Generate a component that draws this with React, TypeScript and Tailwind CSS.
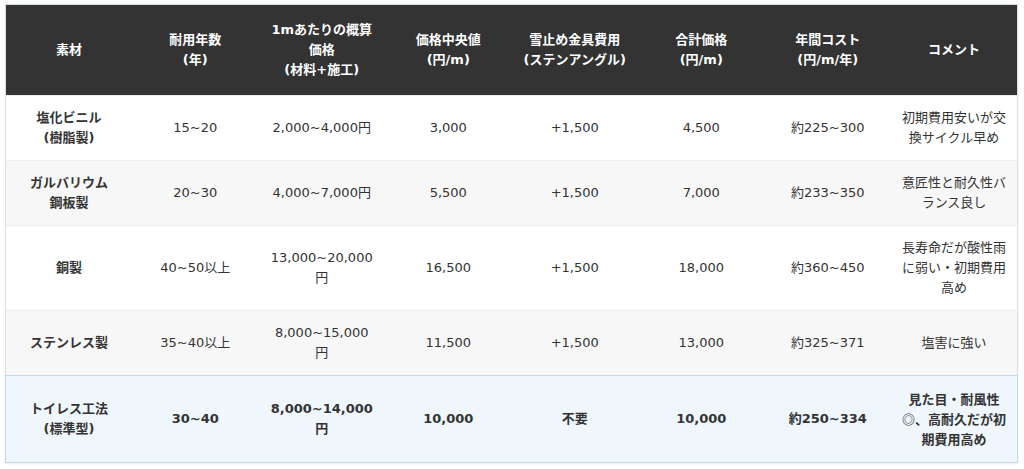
const headers = [
  ["素材"],
  ["耐用年数", "(年)"],
  ["1mあたりの概算", "価格", "(材料+施工)"],
  ["価格中央値", "(円/m)"],
  ["雪止め金具費用", "(ステンアングル)"],
  ["合計価格", "(円/m)"],
  ["年間コスト", "(円/m/年)"],
  ["コメント"],
];

const rows = [
  ["塩化ビニル\n(樹脂製)", "15~20", "2,000~4,000円", "3,000", "+1,500", "4,500", "約225~300", "初期費用安いが交換サイクル早め"],
  ["ガルバリウム\n鋼板製", "20~30", "4,000~7,000円", "5,500", "+1,500", "7,000", "約233~350", "意匠性と耐久性バランス良し"],
  ["銅製", "40~50以上", "13,000~20,000円", "16,500", "+1,500", "18,000", "約360~450", "長寿命だが酸性雨に弱い・初期費用高め"],
  ["ステンレス製", "35~40以上", "8,000~15,000円", "11,500", "+1,500", "13,000", "約325~371", "塩害に強い"],
];

const featured = ["トイレス工法\n(標準型)", "30~40", "8,000~14,000円", "10,000", "不要", "10,000", "約250~334"];

export default function App() {
  return (
    <div
      className="w-[1024px] h-[469px] bg-white pl-[5px] pr-[6px] pt-[4px] text-[#333]"
      style={{ fontFamily: '"DejaVu Sans", "Noto Sans CJK JP", sans-serif' }}
    >
      <table className="w-full table-fixed border-collapse border border-[#d3e0e8] text-[13px] leading-[20px] text-center shadow-[0_1px_2px_rgba(0,0,0,0.08)]">
        <thead>
          <tr className="bg-[#333333] text-white">
            {headers.map((h, i) => (
              <th key={i} className="px-[10px] py-[15px] font-bold align-middle">
                {h.map((line, j) => (
                  <div key={j}>{line}</div>
                ))}
              </th>
            ))}
          </tr>
        </thead>
        <tbody>
          {rows.map((r, i) => (
            <tr key={i} className={i % 2 === 1 ? "bg-[#f7f7f7] border-t border-[#eeeeee]" : "bg-white border-t border-[#eeeeee]"}>
              {r.map((c, j) => (
                <td
                  key={j}
                  className={
                    j === 0
                      ? "px-[10px] py-[12px] font-bold whitespace-pre-line align-middle"
                      : "px-[11px] py-[12px] align-middle"
                  }
                >
                  {c}
                </td>
              ))}
            </tr>
          ))}
          <tr className="bg-[#eff6fc] border border-[#c3d9e6]">
            {featured.map((c, j) => (
              <td
                key={j}
                className={
                  j === 0
                    ? "px-[10px] py-[13px] font-bold whitespace-pre-line align-middle"
                    : "px-[11px] py-[13px] font-bold align-middle"
                }
              >
                {c}
              </td>
            ))}
            <td className="px-[8px] py-[13px] font-bold align-middle font-['Noto_Sans_CJK_JP']">
              見た目・耐風性◎、高耐久だが初期費用高め
            </td>
          </tr>
        </tbody>
      </table>
    </div>
  );
}
